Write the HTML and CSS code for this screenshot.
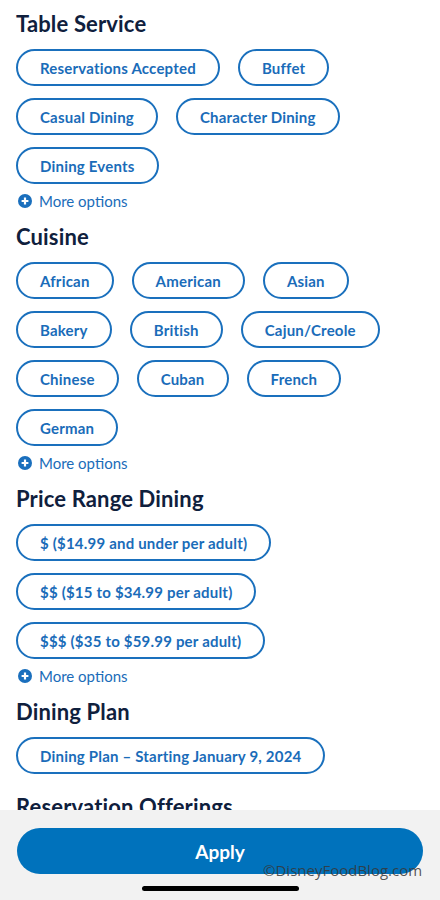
FILE: index.html
```html
<!DOCTYPE html>
<html lang="en">
<head>
<meta charset="utf-8">
<title>Dining Filters</title>
<link rel="stylesheet" href="styles.css">
</head>
<body>
<main class="filters">
  <section class="group">
    <h2 class="group-title">Table Service</h2>
    <div class="chips">
      <button class="chip">Reservations Accepted</button>
      <button class="chip">Buffet</button>
      <button class="chip">Casual Dining</button>
      <button class="chip">Character Dining</button>
      <button class="chip">Dining Events</button>
    </div>
    <div class="more"><svg class="more-icon" viewBox="0 0 14 14" width="14" height="14"><circle cx="7" cy="7" r="7" fill="#1a6fbd"/><path d="M7 3.6v6.8M3.6 7h6.8" stroke="#fff" stroke-width="2.2"/></svg><span>More options</span></div>
  </section>
  <section class="group">
    <h2 class="group-title">Cuisine</h2>
    <div class="chips">
      <button class="chip">African</button>
      <button class="chip">American</button>
      <button class="chip">Asian</button>
      <button class="chip">Bakery</button>
      <button class="chip">British</button>
      <button class="chip">Cajun/Creole</button>
      <button class="chip">Chinese</button>
      <button class="chip">Cuban</button>
      <button class="chip">French</button>
      <button class="chip">German</button>
    </div>
    <div class="more"><svg class="more-icon" viewBox="0 0 14 14" width="14" height="14"><circle cx="7" cy="7" r="7" fill="#1a6fbd"/><path d="M7 3.6v6.8M3.6 7h6.8" stroke="#fff" stroke-width="2.2"/></svg><span>More options</span></div>
  </section>
  <section class="group">
    <h2 class="group-title">Price Range Dining</h2>
    <div class="chips">
      <button class="chip">$ ($14.99 and under per adult)</button>
      <button class="chip">$$ ($15 to $34.99 per adult)</button>
      <button class="chip">$$$ ($35 to $59.99 per adult)</button>
    </div>
    <div class="more"><svg class="more-icon" viewBox="0 0 14 14" width="14" height="14"><circle cx="7" cy="7" r="7" fill="#1a6fbd"/><path d="M7 3.6v6.8M3.6 7h6.8" stroke="#fff" stroke-width="2.2"/></svg><span>More options</span></div>
  </section>
  <section class="group">
    <h2 class="group-title">Dining Plan</h2>
    <div class="chips">
      <button class="chip">Dining Plan – Starting January 9, 2024</button>
    </div>
  </section>
  <section class="group">
    <h2 class="group-title">Reservation Offerings</h2>
    <div class="chips">
      <button class="chip">Online Reservations</button>
    </div>
  </section>
</main>
<footer class="action-bar">
  <button class="apply">Apply</button>
  <div class="home-indicator"></div>
  <div class="watermark">©DisneyFoodBlog.com</div>
</footer>
</body>
</html>
```
FILE: styles.css
```css
html, body {
  margin: 0;
  padding: 0;
  height: 100%;
  overflow: hidden;
  background: #ffffff;
}
body {
  font-family: "Lato", "Liberation Sans", sans-serif;
  color: #0d1f3c;
}
.filters {
  display: flex;
  flex-direction: column;
  padding: 12px 16px 0 16px;
}
.group {
  display: flex;
  flex-direction: column;
  align-items: flex-start;
}
.group-title {
  margin: 0;
  font-size: 22px;
  line-height: 24px;
  font-weight: 700;
  letter-spacing: 0.15px;
  color: #0f203d;
}
.group + .group .group-title {
  margin-top: 14px;
}
.chips {
  display: flex;
  flex-wrap: wrap;
  gap: 12px 18px;
  margin-top: 13px;
  margin-bottom: 7px;
}
.chip {
  height: 37px;
  box-sizing: border-box;
  border: 2px solid #1a70bd;
  border-radius: 19px;
  background: #fff;
  padding: 0 22px;
  font-family: "Lato", "Liberation Sans", sans-serif;
  font-size: 15px;
  font-weight: 700;
  color: #1a6cb9;
  letter-spacing: 0.2px;
  white-space: nowrap;
}
.more {
  display: flex;
  align-items: center;
  height: 20px;
  padding-left: 2px;
  gap: 7px;
  font-size: 15px;
  color: #1a6cb9;
}
.more-icon {
  flex: none;
}
.action-bar {
  position: fixed;
  left: 0;
  right: 0;
  bottom: 0;
  height: 90px;
  background: #f2f2f2;
  display: flex;
  flex-direction: column;
  align-items: center;
  padding-top: 18px;
  box-sizing: border-box;
}
.apply {
  width: 406px;
  height: 46px;
  border: none;
  border-radius: 23px;
  background: #0072bc;
  color: #fff;
  font-family: "Lato", "Liberation Sans", sans-serif;
  font-size: 19px;
  font-weight: 700;
}
.home-indicator {
  margin-top: 12px;
  width: 157px;
  height: 5px;
  border-radius: 3px;
  background: #000;
}
.watermark {
  position: absolute;
  left: 263px;
  top: 50px;
  font-family: "Open Sans", "DejaVu Sans", sans-serif;
  font-size: 15px;
  line-height: 20px;
  color: rgba(55, 55, 55, 0.85);
}
```
